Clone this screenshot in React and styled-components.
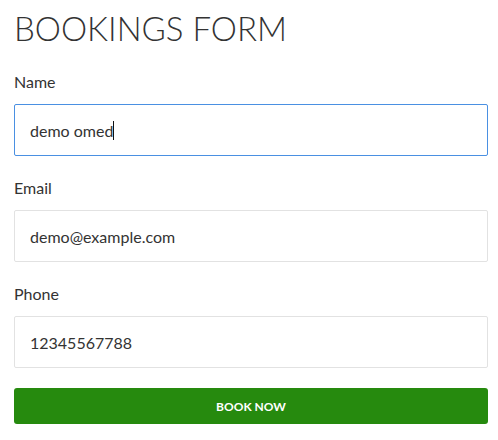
import React from "react";
import styled, { createGlobalStyle } from "styled-components";

const Global = createGlobalStyle`
  html, body { margin: 0; padding: 0; background: #fff; }
  body { font-family: Lato, "Open Sans", sans-serif; color: #333; }
  * { box-sizing: border-box; }
`;

const Page = styled.div`
  padding: 8px 10px 0 14px;
`;

const Title = styled.h1`
  margin: 0 0 24px;
  font-family: Lato, sans-serif;
  font-weight: 300;
  font-size: 33px;
  line-height: 40px;
  color: #333;
  letter-spacing: 0;
`;

const Form = styled.form`
  display: flex;
  flex-direction: column;
`;

const Group = styled.div`
  display: flex;
  flex-direction: column;
  margin-bottom: 22px;
`;

const Label = styled.label`
  font-size: 16px;
  line-height: 20px;
  margin-bottom: 12px;
  color: #333;
`;

const Input = styled.div`
  height: 52px;
  width: 474px;
  border: 1px solid ${(p) => (p.$focused ? "#4a90e2" : "#e2e2e2")};
  border-radius: 2px;
  padding: 0 15px;
  display: flex;
  align-items: center;
  font-size: 16px;
  color: #333;
`;

const Caret = styled.span`
  display: inline-block;
  width: 1px;
  height: 19px;
  background: #111;
  margin-left: 0;
`;

const Button = styled.button`
  width: 474px;
  height: 36px;
  background: #268a0e;
  border: none;
  border-radius: 3px;
  color: #fff;
  font-family: Lato, sans-serif;
  font-weight: 700;
  font-size: 12px;
  text-transform: uppercase;
  margin-top: -2px;
`;

export default function App() {
  return (
    <Page>
      <Global />
      <Title>BOOKINGS FORM</Title>
      <Form>
        <Group>
          <Label>Name</Label>
          <Input $focused>
            demo omed<Caret />
          </Input>
        </Group>
        <Group>
          <Label>Email</Label>
          <Input>demo@example.com</Input>
        </Group>
        <Group>
          <Label>Phone</Label>
          <Input>12345567788</Input>
        </Group>
        <Button type="button">Book Now</Button>
      </Form>
    </Page>
  );
}
